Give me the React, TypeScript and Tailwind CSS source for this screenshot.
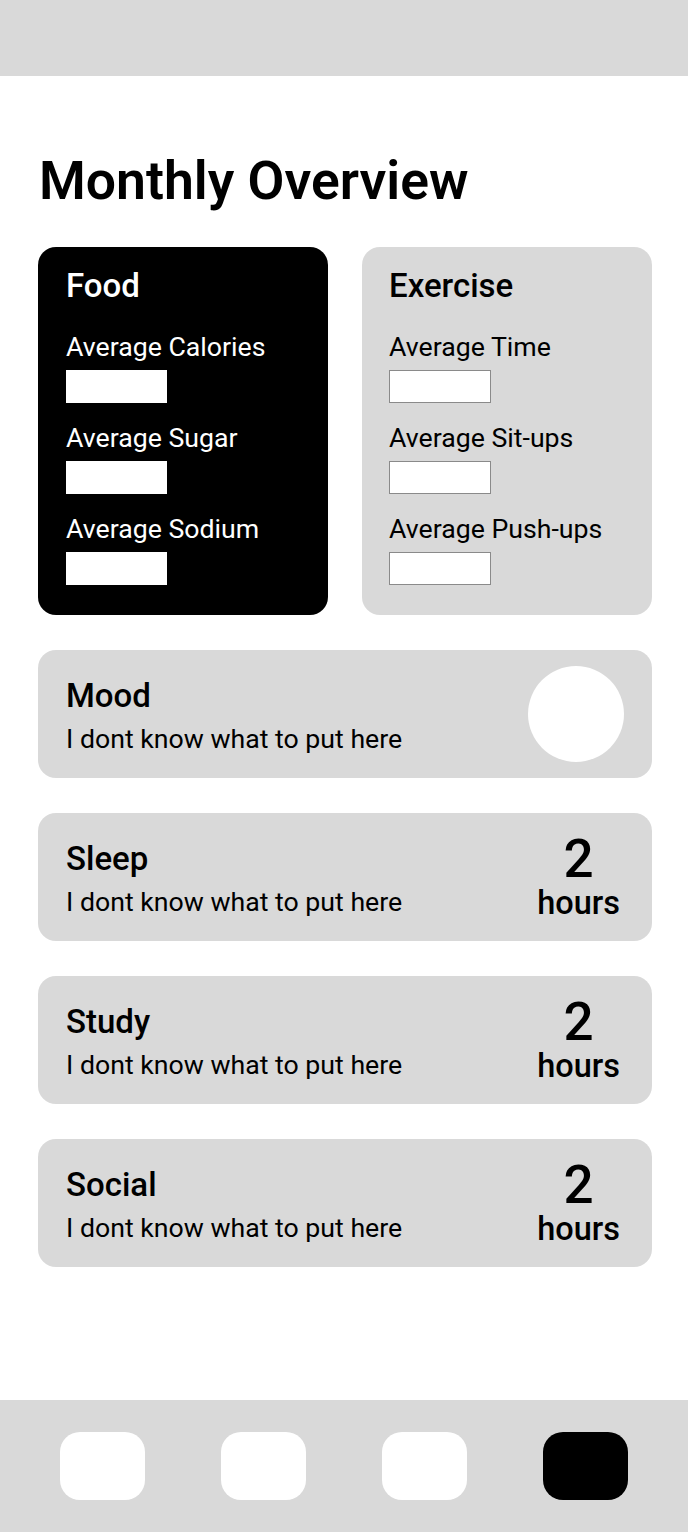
import React from "react";

const font = { fontFamily: "Roboto, 'Noto Sans', Arial, sans-serif" };

function Metric({ label, dark }: { label: string; dark?: boolean }) {
  return (
    <div className="flex flex-col">
      <div className="text-[26.7px] leading-[30px]">{label}</div>
      <div
        className={
          dark
            ? "mt-[8px] h-[33px] w-[101px] bg-white"
            : "mt-[8px] h-[33px] w-[102px] border border-[#8a8a8a] bg-white"
        }
      />
    </div>
  );
}

function RowCard({ title, right }: { title: string; right: React.ReactNode }) {
  return (
    <div className="flex h-[128px] items-start justify-between rounded-[18px] bg-[#d9d9d9] pl-[28px] pr-[28px] pt-[26px]">
      <div className="mt-[1px] flex flex-col">
        <div className="text-[33px] font-medium leading-[38px] text-black">{title}</div>
        <div className="mt-[9px] text-[26.7px] leading-[30px] text-black">I dont know what to put here</div>
      </div>
      {right}
    </div>
  );
}

function Hours() {
  return (
    <div className="mr-[4px] flex flex-col items-center">
      <div className="text-[53px] font-medium leading-[40px] text-black">2</div>
      <div className="mt-[6px] text-[32.5px] font-medium leading-[36px] text-black">hours</div>
    </div>
  );
}

export default function App() {
  return (
    <div style={font} className="flex min-h-[1532px] w-full flex-col bg-white text-black">
      <div className="h-[76px] w-full shrink-0 bg-[#d9d9d9]" />
      <div className="flex flex-col px-[38px] pr-[36px]">
        <h1 className="mt-[77px] pl-[1px] text-[53.5px] font-semibold leading-[56px] text-black">Monthly Overview</h1>
        <div className="mt-[38px] grid grid-cols-2 gap-[34px]">
          <div className="flex flex-col rounded-[18px] bg-black pb-[30px] pl-[28px] pt-[20px] text-white">
            <div className="text-[33px] font-medium leading-[38px]">Food</div>
            <div className="mt-[27px] flex flex-col gap-[20px]">
              <Metric label="Average Calories" dark />
              <Metric label="Average Sugar" dark />
              <Metric label="Average Sodium" dark />
            </div>
          </div>
          <div className="flex flex-col rounded-[18px] bg-[#d9d9d9] pb-[30px] pl-[27px] pt-[20px] text-black">
            <div className="text-[33px] font-medium leading-[38px]">Exercise</div>
            <div className="mt-[27px] flex flex-col gap-[20px]">
              <Metric label="Average Time" />
              <Metric label="Average Sit-ups" />
              <Metric label="Average Push-ups" />
            </div>
          </div>
        </div>
        <div className="mt-[35px] flex flex-col gap-[35px]">
          <RowCard
            title="Mood"
            right={<div className="-mt-[10px] h-[96px] w-[96px] rounded-full bg-white" />}
          />
          <RowCard title="Sleep" right={<Hours />} />
          <RowCard title="Study" right={<Hours />} />
          <RowCard title="Social" right={<Hours />} />
        </div>
      </div>
      <div className="flex-1" />
      <div className="flex h-[132px] w-full shrink-0 items-center justify-between bg-[#d9d9d9] px-[60px]">
        <div className="h-[68px] w-[85px] rounded-[20px] bg-white" />
        <div className="h-[68px] w-[85px] rounded-[20px] bg-white" />
        <div className="h-[68px] w-[85px] rounded-[20px] bg-white" />
        <div className="h-[68px] w-[85px] rounded-[20px] bg-black" />
      </div>
    </div>
  );
}
